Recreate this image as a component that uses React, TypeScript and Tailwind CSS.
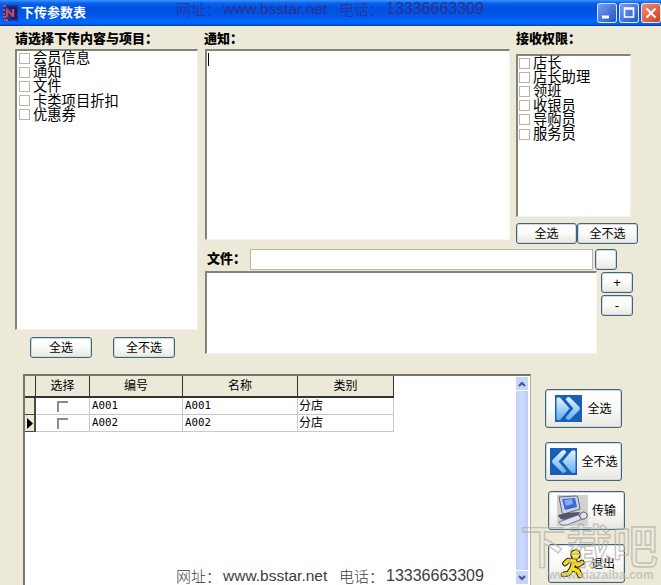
import React from "react";
import clsx from "clsx";

interface XpButtonProps {
  children?: React.ReactNode;
  className?: string;
}

const contents = ["会员信息", "通知", "文件", "卡类项目折扣", "优惠券"];
const roles = ["店长", "店长助理", "领班", "收银员", "导购员", "服务员"];
const stores = [
  { code: "A001", name: "A001", type: "分店", active: false },
  { code: "A002", name: "A002", type: "分店", active: true },
];

function XpButton({ children, className }: XpButtonProps) {
  return (
    <button
      className={clsx(
        "flex shrink-0 items-center justify-center rounded-[3px] border border-[#3f6480] bg-gradient-to-b from-white via-[#fafaf8] to-[#e9e7df] whitespace-nowrap shadow-[inset_0_0_0_1px_#d3dadb]",
        className
      )}
    >
      {children}
    </button>
  );
}

function Label({ children, className }: XpButtonProps) {
  return <div className={clsx("text-[13px] leading-4 font-black whitespace-nowrap", className)}>{children}</div>;
}

function CheckList({ items, className }: { items: string[]; className?: string }) {
  return (
    <ul className={clsx("border-t-2 border-l-2 border-r border-b border-t-[#85837a] border-l-[#85837a] border-r-[#f5f3ea] border-b-[#f5f3ea] bg-white", className)}>
      {items.map((item) => (
        <li key={item} className="flex h-[14.2px] items-center gap-[3px] text-[14.3px] leading-[14px] whitespace-nowrap">
          <span className="size-[11px] shrink-0 border border-[#b5b4ac] bg-white" />
          {item}
        </li>
      ))}
    </ul>
  );
}

function Contact({ className }: { className?: string }) {
  return (
    <div className={clsx("absolute left-[176px] flex leading-[18px] whitespace-nowrap", className)}>
      <span className="w-[47px] font-['Noto_Sans_CJK_SC',sans-serif] text-[15px] font-light">网址：</span>
      <span className="w-[116px] text-[15.5px]">www.bsstar.net</span>
      <span className="w-[47px] font-['Noto_Sans_CJK_SC',sans-serif] text-[15px] font-light">电话：</span>
      <span className="text-[16px]">13336663309</span>
    </div>
  );
}

function TitleBar() {
  return (
    <header className="flex h-[26px] shrink-0 items-center bg-[linear-gradient(180deg,#3d95ff_0%,#0a62ee_12%,#0052df_30%,#0057e8_60%,#0066ff_80%,#0062f5_92%,#003fae_100%)] pl-[3px] text-white">
      <svg width="15" height="16" viewBox="0 0 15 16">
        <rect width="15" height="16" fill="#2a2f86" />
        <path d="M0 1h3M0 5h2M0 9h2M0 12h3M1 15h4" stroke="#b8506a" strokeWidth="2" />
        <path d="M4 12V5l6 6V4" fill="none" stroke="#c24a5e" strokeWidth="2" />
        <path d="M6 3h7v10H8" fill="none" stroke="#10165c" strokeWidth="1.5" />
      </svg>
      <h1 className="ml-[3px] flex-1 text-[13px] leading-5 font-bold">下传参数表</h1>
      <div className="flex gap-[2px]">
        <div className="size-[20px] rounded-[3px] border border-white/80 bg-gradient-to-br from-[#789cf2] to-[#2053cc]">
          <svg viewBox="0 0 18 18"><path d="M4 13h7" stroke="white" strokeWidth="3" /></svg>
        </div>
        <div className="size-[20px] rounded-[3px] border border-white/80 bg-gradient-to-br from-[#789cf2] to-[#2053cc]">
          <svg viewBox="0 0 18 18"><path d="M4.5 4v9h9V4zM4 5h10" fill="none" stroke="white" strokeWidth="1.6" /></svg>
        </div>
        <div className="size-[20px] rounded-[3px] border border-white/80 bg-gradient-to-br from-[#f08c6d] to-[#cf3c20]">
          <svg viewBox="0 0 18 18"><path d="M4.5 4.5l9 9m0-9l-9 9" stroke="white" strokeWidth="2" /></svg>
        </div>
      </div>
    </header>
  );
}

function ArrowIcon({ flip }: { flip?: boolean }) {
  const id = flip ? "arrow-left" : "arrow-right";

  return (
    <svg width="27" height="27" viewBox="0 0 27 27" className={clsx("shrink-0", flip && "-scale-x-100")}>
      <defs>
        <linearGradient id={id} gradientUnits="userSpaceOnUse" x1="0" y1="2" x2="0" y2="25">
          <stop offset="0" stopColor="#e6f5ff" />
          <stop offset="1" stopColor="#62b0f3" />
        </linearGradient>
      </defs>
      <rect width="27" height="27" fill="#1760b5" />
      <path d="M2 3l3 0 9 10.500L5 24.500l-3 0z" fill={`url(#${id})`} stroke={`url(#${id})`} strokeLinejoin="round" />
      <path d="M13.500 5l8.500 8.500-8.500 8.500" fill="none" stroke={`url(#${id})`} strokeWidth="5.500" strokeLinecap="round" strokeLinejoin="round" />
      <path d="M8.500 3.500l8.500 10-8.500 10" fill="none" stroke="#1760b5" strokeWidth="2" />
    </svg>
  );
}

function ComputerIcon() {
  return (
    <svg width="31" height="31" viewBox="0 0 31 31" className="shrink-0">
      <rect width="31" height="31" fill="#d2d1cf" />
      <path d="M3 22l9-5 12 1 6 5-14 5-9 2z" fill="#b9bac8" />
      <path d="M2 2l17-1q2 0 2 2l2 11-16 5q-2 0-2-2z" fill="#cdd3e6" stroke="#65677c" />
      <path d="M5 4l13-1 2 9-12 3z" fill="#3869d0" />
      <path d="M7 5l8-1 1 5-7 2z" fill="#82acf4" />
      <path d="M1 20l8-2 14-1-2 4-14 4q-5-1-6-5z" fill="#55566b" />
      <path d="M2 27l19-7 4 4-15 6-6 0z" fill="#e0e3f0" stroke="#77798e" />
      <path d="M23 19q4-4 7 0 1 4-3 5-5 1-4-5z" fill="#dfe1ec" stroke="#5a5b70" />
    </svg>
  );
}

function RunnerIcon() {
  const limbs = "M14.500 12L12 19M13.500 12L8 11.500 5 14.500M14.500 12.500L17.500 16 22 13.500M12 19.500L8.500 24.500 3.500 25.500M12.500 19.500L18 22 20 26.500";

  return (
    <svg width="25" height="30" viewBox="0 0 25 30" className="shrink-0" strokeLinecap="round" strokeLinejoin="round">
      <path d={limbs} fill="none" stroke="#242000" strokeWidth="5.600" />
      <circle cx="15.500" cy="5.500" r="4.700" fill="#ffe52b" stroke="#242000" strokeWidth="1.200" />
      <path d={limbs} fill="none" stroke="#f9dc19" strokeWidth="3.600" />
    </svg>
  );
}

function ScrollArrow({ up }: { up?: boolean }) {
  return (
    <div className="flex h-[15px] items-center justify-center border border-white bg-[#c5d5fc]">
      <svg width="8" height="6" viewBox="0 0 8 6"><path d={up ? "M1 5l3-3 3 3" : "M1 1l3 3 3-3"} fill="none" stroke="#41557e" strokeWidth="2" /></svg>
    </div>
  );
}

function StoreGrid() {
  const columns = "grid grid-cols-[11px_54px_93px_115px_96px]";
  const cell = "border-r border-b border-[#c9c9c9]";
  const mono = "pl-0.5 font-['DejaVu_Sans_Mono',monospace] text-[10.8px]";

  return (
    <section className="flex h-[211px] w-[508px] shrink-0 border-t-2 border-l-2 border-r border-t-[#77756c] border-l-[#77756c] border-r-[#b5b3a6] bg-white text-[12px]">
      <div className="w-[490px]">
        <div className={clsx(columns, "h-[22px] w-[369px] border-b-2 border-[#33322e] bg-[#ece9d8] text-center leading-[21px]")}>
          {["", "选择", "编号", "名称", "类别"].map((title, idx) => (
            <div key={idx} className="border-r-[1.5px] border-[#33322e]">{title}</div>
          ))}
        </div>
        {stores.map((store) => (
          <div key={store.code} className={clsx(columns, "h-[17px] w-[369px] leading-4")}>
            <div className="flex items-center justify-center border-r-2 border-b border-[#4c4a43] bg-[#ece9d8]">
              {store.active && <svg width="7" height="11" viewBox="0 0 7 11"><path d="M1 0l6 5.500L1 11z" /></svg>}
            </div>
            <div className={clsx(cell, "flex items-center justify-center")}>
              <span className="size-[11px] border-t-2 border-l-2 border-[#8d8c86]" />
            </div>
            <div className={clsx(cell, mono)}>{store.code}</div>
            <div className={clsx(cell, mono)}>{store.name}</div>
            <div className={clsx(cell, "pl-px")}>{store.type}</div>
          </div>
        ))}
      </div>
      <div className="flex w-[14px] flex-col bg-gradient-to-r from-[#bdcffb] via-[#ccdafd] to-[#b6c9f8]">
        <ScrollArrow up />
        <div className="flex-1 border-x border-white" />
        <ScrollArrow />
      </div>
    </section>
  );
}

export default function App() {
  return (
    <main className="relative flex h-[585px] w-[661px] flex-col overflow-hidden bg-[#ece9d8] font-['Liberation_Sans','Noto_Sans_CJK_SC',sans-serif] text-black">
      <TitleBar />
      <div className="flex h-[348px] shrink-0 pt-[5px] pl-[15px]">
        {/* Content selection */}
        <section className="w-[189px] shrink-0">
          <Label className="h-[18px]">请选择下传内容与项目：</Label>
          <CheckList items={contents} className="h-[281px] w-[183px] pl-0.5" />
          <div className="mt-[7px] ml-[15px] flex gap-[21px] text-[12px]">
            <XpButton className="h-[21px] w-[62px]">全选</XpButton>
            <XpButton className="h-[21px] w-[62px]">全不选</XpButton>
          </div>
        </section>

        <div className="flex-1">
          <div className="flex h-[217px]">
            <section className="w-[311px]">
              <Label className="h-[18px]">通知：</Label>
              <div className="ml-px h-[191px] w-[305px] border-t-2 border-l-2 border-r border-b border-t-[#85837a] border-l-[#85837a] border-r-[#f8f6ee] border-b-[#f8f6ee] bg-white pt-0.5 pl-px">
                <div className="h-[13px] w-px bg-black" />
              </div>
            </section>
            {/* Receiving roles */}
            <section>
              <Label className="h-[23px] pl-px">接收权限：</Label>
              <CheckList items={roles} className="ml-px h-[163px] w-[115px] pl-px" />
              <div className="mt-[6px] ml-px flex text-[12px]">
                <XpButton className="h-[21px] w-[61px]">全选</XpButton>
                <XpButton className="h-[21px] w-[61px]">全不选</XpButton>
              </div>
            </section>
          </div>
          <div className="flex h-[22px] items-center pl-[3px]">
            <Label className="w-[43px]">文件：</Label>
            <div className="h-[21px] w-[343px] border-[1.5px] border-[#b8b5a3] bg-white" />
            <XpButton className="ml-[2px] h-[21px] w-[22px]" />
          </div>
          <div className="mt-px flex">
            <div className="ml-px h-[83px] w-[392px] border-t-2 border-l-2 border-r border-b border-t-[#85837a] border-l-[#85837a] border-r-[#f8f6ee] border-b-[#f8f6ee] bg-white" />
            <div className="ml-1 flex flex-col gap-[2px] pt-px text-[13px]">
              <XpButton className="h-[21px] w-[32px]">+</XpButton>
              <XpButton className="h-[21px] w-[32px]">-</XpButton>
            </div>
          </div>
        </div>
      </div>

      <div className="flex pl-[23px]">
        <StoreGrid />
        <div className="flex flex-col pt-[15px] pl-[14px] text-[12px]">
          <XpButton className="h-[39px] w-[77px] gap-[5px]"><ArrowIcon />全选</XpButton>
          <XpButton className="mt-[14px] h-[39px] w-[77px] gap-[4px] pl-px"><ArrowIcon flip />全不选</XpButton>
          <XpButton className="mt-[10px] ml-[3px] h-[39px] w-[77px] gap-[4px]"><ComputerIcon />传输</XpButton>
          <XpButton className="mt-[14px] ml-[3px] h-[39px] w-[77px] gap-[6px] pl-0.5"><RunnerIcon />退出</XpButton>
        </div>
      </div>

      <Contact className="top-0 text-[#2f2f92]" />
      <Contact className="top-[567px] text-[#3d3d3d]" />
      <div className="pointer-events-none absolute top-[519px] left-[520px] w-[141px] opacity-75">
        <div className="text-[46px] leading-[56px] font-medium text-transparent [-webkit-text-stroke:1.3px_#b3b1a8]">下载吧</div>
        <div className="-mt-[8px] ml-[28px] text-[12px] leading-4 font-bold text-[#bebbb0]">www.xiazaiba.com</div>
      </div>
    </main>
  );
}
